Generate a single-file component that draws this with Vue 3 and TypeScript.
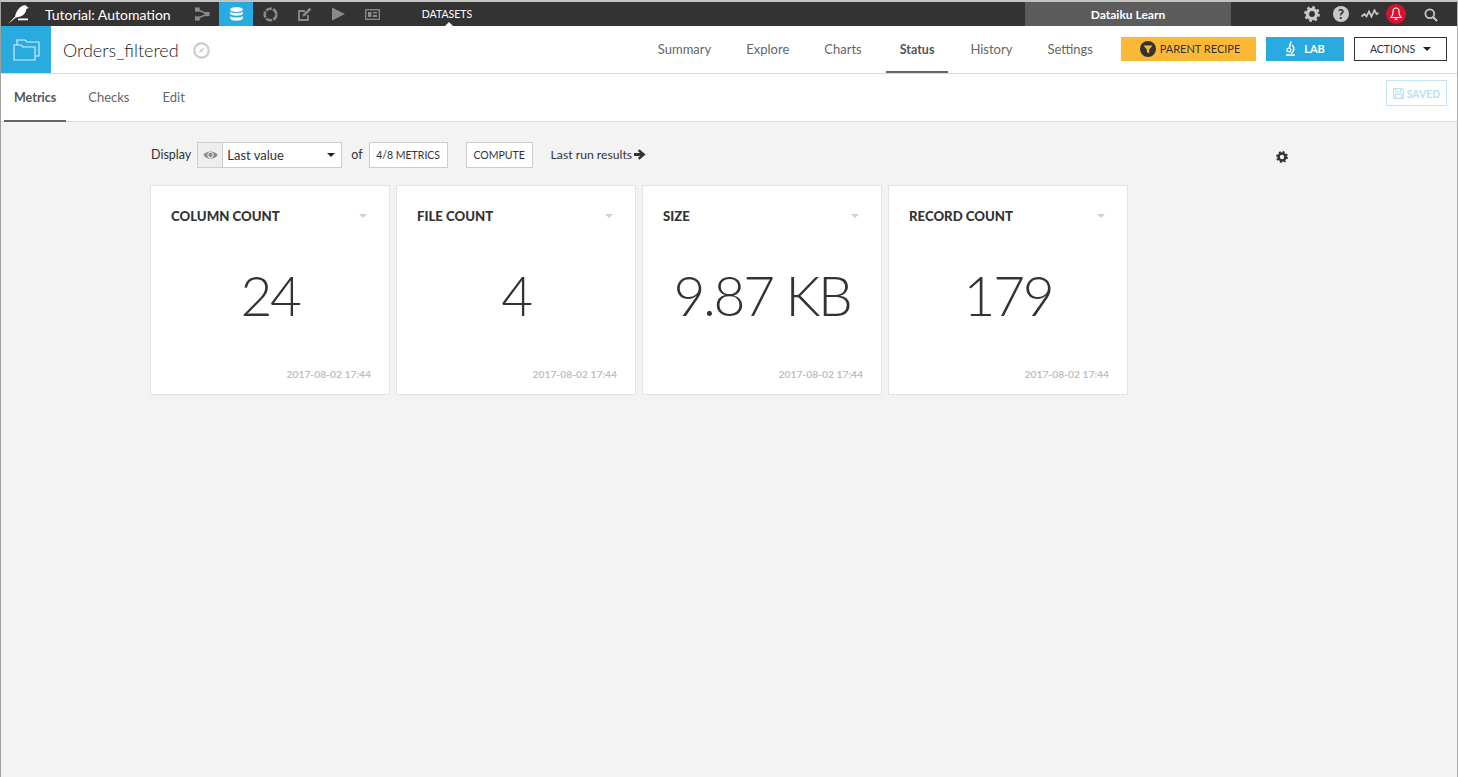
<script setup lang="ts">
interface Metric {
  title: string
  value: string
  time: string
}

const metrics: Metric[] = [
  { title: 'COLUMN COUNT', value: '24', time: '2017-08-02 17:44' },
  { title: 'FILE COUNT', value: '4', time: '2017-08-02 17:44' },
  { title: 'SIZE', value: '9.87 KB', time: '2017-08-02 17:44' },
  { title: 'RECORD COUNT', value: '179', time: '2017-08-02 17:44' },
]

const datasetTabs = ['Summary', 'Explore', 'Charts', 'Status', 'History', 'Settings']
const subTabs = ['Metrics', 'Checks', 'Edit']
</script>

<template>
  <div class="page">
    <header class="topbar">
      <svg class="logo" width="21" height="20" viewBox="0 0 21 20">
        <path d="M0 20 L7 12.5 C8 9 10 4 14.5 1.8 C16 1 18 1 19 2.8 L21 4 L18.5 4.8 C18 8.5 16 11.5 12.5 12.5 L8 13.5 Z" fill="#fff" />
        <rect x="10" y="14.5" width="10" height="1.8" fill="#fff" />
      </svg>
      <span class="project">Tutorial: Automation</span>
      <div class="nav-icons">
        <span class="nav-icon">
          <svg width="15" height="14" viewBox="0 0 16 14">
            <path d="M3 2.5 L13 7 L3 11.5" fill="none" stroke="#8a8a8a" stroke-width="1.6" />
            <rect x="0" y="0" width="5" height="4.5" fill="#8a8a8a" />
            <rect x="0" y="9.5" width="5" height="4.5" fill="#8a8a8a" />
            <rect x="10.5" y="4.8" width="5" height="4.5" fill="#8a8a8a" />
          </svg>
        </span>
        <span class="nav-icon active">
          <svg width="13" height="14" viewBox="0 0 13 14">
            <ellipse cx="6.5" cy="2.5" rx="6.3" ry="2.4" fill="#fff" />
            <path d="M0.2 4.5 C1.5 6.6 11.5 6.6 12.8 4.5 V7 C11.5 9.2 1.5 9.2 0.2 7 Z" fill="#fff" />
            <path d="M0.2 9 C1.5 11 11.5 11 12.8 9 V11.5 C11.5 14.4 1.5 14.4 0.2 11.5 Z" fill="#fff" />
          </svg>
        </span>
        <span class="nav-icon">
          <svg width="15" height="15" viewBox="0 0 15 15">
            <circle cx="7.5" cy="7.5" r="5.8" fill="none" stroke="#8a8a8a" stroke-width="2.6" stroke-dasharray="6.1 1.2" />
          </svg>
        </span>
        <span class="nav-icon">
          <svg width="15" height="15" viewBox="0 0 15 15">
            <path d="M11 8 V13 H2 V4 H8" fill="none" stroke="#8a8a8a" stroke-width="1.8" />
            <path d="M6 7 L12.5 0.8 L14.3 2.6 L8 9 L5.6 9.5 Z" fill="#8a8a8a" />
          </svg>
        </span>
        <span class="nav-icon">
          <svg width="15" height="14" viewBox="0 0 15 14">
            <path d="M1 0.5 L14 7 L1 13.5 Z" fill="#8a8a8a" />
          </svg>
        </span>
        <span class="nav-icon">
          <svg width="15" height="11" viewBox="0 0 15 11">
            <rect x="0.7" y="0.7" width="13.6" height="9.6" fill="none" stroke="#8a8a8a" stroke-width="1.3" />
            <rect x="3" y="3" width="3.5" height="5" fill="#8a8a8a" />
            <rect x="8" y="3" width="4" height="1.5" fill="#8a8a8a" />
            <rect x="8" y="6" width="4" height="2" fill="#8a8a8a" />
          </svg>
        </span>
      </div>
      <span class="section">DATASETS</span>
      <span class="instance">Dataiku Learn</span>
      <div class="tools">
        <svg class="tool-gear" width="16" height="16" viewBox="0 0 16 16">
          <circle cx="8" cy="8" r="4.6" fill="none" stroke="#c8c8c8" stroke-width="3.4" />
          <circle cx="8" cy="8" r="6.6" fill="none" stroke="#c8c8c8" stroke-width="2.6" stroke-dasharray="2.6 2.6" />
        </svg>
        <span class="tool-help">?</span>
        <svg class="tool-pulse" width="18" height="10" viewBox="0 0 18 10">
          <path d="M0.5 7.5 L3.5 5 L5.5 7.5 L8 2.5 L10.5 7.5 L13.5 1.2 L15.5 5 L17.5 4" fill="none" stroke="#c8c8c8" stroke-width="1.7" />
        </svg>
        <span class="tool-bell">
          <svg width="12" height="14" viewBox="0 0 12 14">
            <path d="M6 1 C3.5 1 3 3 3 5 C3 8 2 9.5 1 10.5 H11 C10 9.5 9 8 9 5 C9 3 8.5 1 6 1 Z" fill="none" stroke="#fff" stroke-width="1.2" />
            <rect x="4.6" y="11.6" width="2.8" height="1.4" fill="#fff" />
          </svg>
        </span>
        <svg class="tool-search" width="14" height="14" viewBox="0 0 14 14">
          <circle cx="5.8" cy="5.8" r="4.4" fill="none" stroke="#c8c8c8" stroke-width="1.8" />
          <path d="M9 9 L13 13" stroke="#c8c8c8" stroke-width="2.2" />
        </svg>
      </div>
    </header>

    <div class="dataset-bar">
      <div class="dataset-badge">
        <svg width="27" height="25" viewBox="0 0 27 25">
          <path d="M1 8 H4 V3 H12 L14 5 H26 V19 H22 V23 H1 Z M4 8 H8 L10 10 H22 V19" fill="none" stroke="#d5edf8" stroke-width="1.2" />
        </svg>
      </div>
      <h1 class="dataset-name">Orders_filtered</h1>
      <svg class="compass" width="17" height="17" viewBox="0 0 17 17">
        <circle cx="8.5" cy="8.5" r="7.2" fill="none" stroke="#d0d0d0" stroke-width="2.4" />
        <path d="M11.5 5.5 L9.6 9.6 L5.5 11.5 L7.4 7.4 Z" fill="#d0d0d0" />
      </svg>
      <nav class="dataset-tabs">
        <span v-for="tab in datasetTabs" :key="tab" class="dataset-tab" :class="{ current: tab === 'Status' }">{{ tab }}</span>
      </nav>
      <button class="btn parent">
        <svg width="16" height="16" viewBox="0 0 16 16">
          <circle cx="8" cy="8" r="8" fill="#333" />
          <path d="M3.5 4.5 H12.5 L9.2 8.4 V12.5 L6.8 11 V8.4 Z" fill="#fbb935" />
        </svg>
        PARENT RECIPE
      </button>
      <button class="btn lab">
        <svg width="11" height="15" viewBox="0 0 11 15">
          <path d="M6 0.5 L4.4 6.5 M7.2 4 C9.8 6.5 9.2 11 6 12.5 M1 14 H10" fill="none" stroke="#fff" stroke-width="1.6" />
          <circle cx="3.8" cy="9" r="1.9" fill="none" stroke="#fff" stroke-width="1.2" />
        </svg>
        LAB
      </button>
      <button class="btn actions">ACTIONS <i class="caret"></i></button>
    </div>

    <div class="sub-bar">
      <span v-for="tab in subTabs" :key="tab" class="sub-tab" :class="{ current: tab === 'Metrics' }">{{ tab }}</span>
      <button class="saved">
        <svg width="11" height="11" viewBox="0 0 10 10">
          <path d="M0.6 0.6 H8 L9.4 2 V9.4 H0.6 Z M2.5 0.8 V3.6 H7 V0.8 M2.2 9.2 V5.8 H7.8 V9.2" fill="none" stroke="#bcdff2" stroke-width="1" />
        </svg>
        SAVED
      </button>
    </div>

    <main class="content">
      <div class="toolbar">
        <span class="label">Display</span>
        <div class="view-select">
          <span class="eye">
            <svg width="15" height="10" viewBox="0 0 14 9">
              <path d="M0.3 4.5 C3 0 11 0 13.7 4.5 C11 9 3 9 0.3 4.5 Z" fill="#8b8b8b" />
              <circle cx="7" cy="4.5" r="2.9" fill="#eee" />
              <circle cx="7" cy="4.5" r="2" fill="#8b8b8b" />
            </svg>
          </span>
          <span class="select-value">Last value</span>
          <i class="caret"></i>
        </div>
        <span class="label of">of</span>
        <button class="tool-btn">4/8 METRICS</button>
        <button class="tool-btn compute">COMPUTE</button>
        <span class="last-run">Last run results
          <svg width="12" height="11" viewBox="0 0 11 10">
            <path d="M0 3.7 H5.5 L3.6 1.7 L5 0.3 L10.6 5 L5 9.7 L3.6 8.3 L5.5 6.3 H0 Z" fill="#333" />
          </svg>
        </span>
        <svg class="settings" width="12" height="12" viewBox="0 0 16 16">
          <circle cx="8" cy="8" r="4.6" fill="none" stroke="#333" stroke-width="3.4" />
          <circle cx="8" cy="8" r="6.6" fill="none" stroke="#333" stroke-width="2.6" stroke-dasharray="2.6 2.6" />
        </svg>
      </div>

      <div class="cards">
        <section v-for="metric in metrics" :key="metric.title" class="card">
          <div class="card-head">
            <span class="card-title">{{ metric.title }}</span>
            <i class="card-caret"></i>
          </div>
          <div class="card-value">{{ metric.value }}</div>
          <div class="card-time">{{ metric.time }}</div>
        </section>
      </div>
    </main>
  </div>
</template>

<style>
html,
body {
  margin: 0;
  background: #f3f3f3;
}
</style>

<style scoped>
.page {
  width: 1458px;
  height: 777px;
  overflow: hidden;
  box-sizing: border-box;
  background: #f3f3f3;
  border-top: 2px solid #c4c4c4;
  border-left: 1px solid #a0a0a0;
  border-right: 1px solid #b0b0b0;
  font-family: Lato, "Noto Sans", sans-serif;
  color: #333;
}

button {
  font-family: inherit;
  cursor: pointer;
}

.topbar {
  position: relative;
  display: flex;
  align-items: center;
  height: 24px;
  background: #333;
  color: #fff;
}

.logo {
  margin-left: 7px;
  flex: none;
}

.project {
  margin-left: 16px;
  width: 140px;
  font-size: 14px;
  white-space: nowrap;
}

.nav-icons {
  display: flex;
  height: 24px;
}

.nav-icon {
  display: flex;
  align-items: center;
  justify-content: center;
  width: 34px;
  height: 24px;
}

.nav-icon.active {
  background: #29abe0;
}

.section {
  margin-left: 28px;
  width: 60px;
  font-size: 10.5px;
  text-align: center;
  white-space: nowrap;
}

.section::after {
  content: "";
  position: absolute;
  left: 444px;
  bottom: 0;
  border: 4px solid transparent;
  border-top: 0;
  border-bottom-color: #fff;
}

.instance {
  margin-left: 548px;
  width: 206px;
  height: 24px;
  line-height: 26px;
  background: #5c5c5c;
  text-align: center;
  font-size: 12px;
  font-weight: 700;
}

.tools {
  position: relative;
  flex: 1;
  height: 24px;
}

.tools > * {
  position: absolute;
}

.tool-gear {
  left: 73px;
  top: 4px;
}

.tool-help {
  left: 102px;
  top: 4px;
  width: 16px;
  height: 16px;
  border-radius: 50%;
  background: #c8c8c8;
  color: #333;
  font-size: 13px;
  font-weight: 900;
  line-height: 16px;
  text-align: center;
}

.tool-pulse {
  left: 130px;
  top: 7px;
}

.tool-bell {
  left: 155px;
  top: 2px;
  display: flex;
  align-items: center;
  justify-content: center;
  width: 20px;
  height: 20px;
  border-radius: 50%;
  background: #d9112f;
}

.tool-search {
  left: 193px;
  top: 6px;
}

.dataset-bar {
  display: flex;
  align-items: center;
  height: 47px;
  padding-right: 10px;
  background: #fff;
  border-bottom: 1px solid #d9d9d9;
}

.dataset-badge {
  display: flex;
  align-items: center;
  justify-content: center;
  width: 50px;
  height: 47px;
  background: #29abe0;
}

.dataset-name {
  margin: 0 0 0 12px;
  width: 130px;
  font-size: 18px;
  font-weight: 300;
  color: #222;
  white-space: nowrap;
}

.compass {
  flex: none;
  margin-top: 2px;
}

.dataset-tabs {
  display: flex;
  margin-left: auto;
  height: 47px;
}

.dataset-tab {
  box-sizing: border-box;
  height: 47px;
  line-height: 47px;
  padding: 0 11px;
  margin-right: 13px;
  font-size: 13px;
  color: #666;
  white-space: nowrap;
}

.dataset-tab.current {
  font-weight: 700;
  font-size: 12.5px;
  color: #555;
  border-bottom: 2px solid #666;
  padding: 0 14px;
  margin-right: 11px;
}

.btn {
  display: flex;
  align-items: center;
  justify-content: center;
  flex: none;
  gap: 4px;
  box-sizing: border-box;
  height: 24px;
  padding: 0;
  margin-bottom: 2px;
  border: 0;
  border-radius: 0;
  font-size: 11px;
}

.parent {
  width: 135px;
  margin-left: 4px;
  padding-left: 3px;
  background: #fbb935;
  color: #333;
}

.lab {
  width: 78px;
  margin-left: 10px;
  background: #29abe0;
  color: #fff;
  font-weight: 700;
  gap: 8px;
}

.actions {
  width: 93px;
  margin-left: 10px;
  background: #fff;
  border: 1px solid #333;
  color: #333;
  font-size: 10.5px;
  gap: 8px;
}

.caret {
  display: inline-block;
  border: 4px solid transparent;
  border-bottom: 0;
  border-top-color: #222;
}

.sub-bar {
  display: flex;
  height: 47px;
  background: #fff;
  border-bottom: 1px solid #d9d9d9;
  padding-left: 3px;
}

.sub-tab {
  box-sizing: border-box;
  height: 48px;
  line-height: 47px;
  padding: 0 10px;
  margin-right: 13px;
  font-size: 13px;
  color: #666;
}

.sub-tab.current {
  font-size: 12.5px;
  font-weight: 700;
  color: #555;
  border-bottom: 2px solid #666;
  margin-right: 12px;
}

.saved {
  display: flex;
  align-items: center;
  justify-content: center;
  gap: 3px;
  align-self: flex-start;
  box-sizing: border-box;
  width: 61px;
  height: 26px;
  margin: 6px 10px 0 auto;
  padding: 1px 0 0;
  background: #fff;
  border: 1px solid #c4e4f5;
  color: #b9dff3;
  font-size: 10.5px;
  font-weight: 700;
}

.content {
  padding: 20px 0 0 150px;
}

.toolbar {
  position: relative;
  display: flex;
  align-items: center;
  height: 26px;
  font-size: 12.5px;
}

.label {
  margin-right: 6px;
  position: relative;
  top: -1px;
}

.view-select {
  display: flex;
  align-items: center;
  box-sizing: border-box;
  width: 145px;
  height: 26px;
  background: #fff;
  border: 1px solid #ccc;
}

.eye {
  display: flex;
  align-items: center;
  justify-content: center;
  width: 24px;
  height: 24px;
  background: #eee;
  border-right: 1px solid #ccc;
}

.select-value {
  margin-left: 4px;
  flex: 1;
  font-size: 13px;
}

.view-select .caret {
  margin-right: 6px;
}

.of {
  margin: 0 6px 0 9px;
}

.tool-btn {
  box-sizing: border-box;
  height: 26px;
  width: 79px;
  padding: 0;
  background: #fff;
  border: 1px solid #ccc;
  color: #333;
  font-size: 10.5px;
}

.compute {
  width: 67px;
  margin-left: 18px;
}

.last-run {
  display: flex;
  align-items: center;
  gap: 2px;
  margin-left: 18px;
  position: relative;
  top: -1px;
  font-size: 12.2px;
  white-space: nowrap;
}

.settings {
  position: absolute;
  left: 1125px;
  top: 9px;
}

.cards {
  display: flex;
  gap: 6px;
  margin-top: 17px;
  margin-left: -1px;
}

.card {
  display: flex;
  flex-direction: column;
  box-sizing: border-box;
  width: 240px;
  height: 210px;
  background: #fff;
  border: 1px solid #e4e4e4;
}

.card-head {
  display: flex;
  align-items: center;
  justify-content: space-between;
  padding: 21px 22px 0 20px;
  height: 18px;
}

.card-title {
  font-size: 13.2px;
  font-weight: 900;
  color: #333;
}

.card-caret {
  border: 4px solid transparent;
  border-bottom: 0;
  border-top-color: #d0d0d0;
}

.card-value {
  margin-top: 40px;
  text-align: center;
  font-size: 55px;
  letter-spacing: -2.3px;
  line-height: 60px;
  font-weight: 300;
  color: #333;
  white-space: nowrap;
}

.card-time {
  margin-top: auto;
  padding: 0 18px 14px 0;
  text-align: right;
  font-size: 10.3px;
  font-weight: 700;
  color: #bfbfbf;
}
</style>
